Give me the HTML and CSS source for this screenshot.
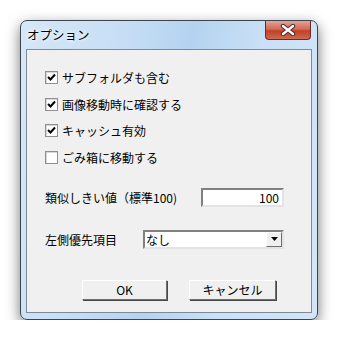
FILE: index.html
```html
<!DOCTYPE html>
<html><head><meta charset="utf-8"><link rel="stylesheet" href="styles.css"></head><body>
<div class="window">
    <div class="titlebar">
        <span class="title">オプション</span>
        <div class="close">
            <svg width="16" height="12" viewBox="0 0 16 12"><path d="M3 2 L13 10 M13 2 L3 10" stroke="#4a2a2a" stroke-width="4.4" stroke-linecap="round"/><path d="M3 2 L13 10 M13 2 L3 10" stroke="#fff" stroke-width="2.4" stroke-linecap="round"/></svg>
        </div>
    </div>
    <div class="client">
        <div class="checks">
            <div class="check"><span class="box"><svg width="9" height="9" viewBox="0 0 9 9"><path d="M1 4 L3.5 6.5 L8 1.5" fill="none" stroke="#000" stroke-width="2"/></svg></span>サブフォルダも含む</div>
            <div class="check"><span class="box"><svg width="9" height="9" viewBox="0 0 9 9"><path d="M1 4 L3.5 6.5 L8 1.5" fill="none" stroke="#000" stroke-width="2"/></svg></span>画像移動時に確認する</div>
            <div class="check"><span class="box"><svg width="9" height="9" viewBox="0 0 9 9"><path d="M1 4 L3.5 6.5 L8 1.5" fill="none" stroke="#000" stroke-width="2"/></svg></span>キャッシュ有効</div>
            <div class="check"><span class="box"></span>ごみ箱に移動する</div>
        </div>
        <div class="field field-threshold">
            <span class="field-label">類似しきい値（標準100)</span>
            <div class="textbox">100</div>
        </div>
        <div class="field field-priority">
            <span class="field-label">左側優先項目</span>
            <div class="combo">
                <span class="combo-value">なし</span>
                <span class="drop"><svg width="7" height="4" viewBox="0 0 7 4"><path d="M0 0 H7 L3.5 4 Z" fill="#000"/></svg></span>
            </div>
        </div>
        <div class="buttons">
            <div class="btn btn-ok">OK</div>
            <div class="btn btn-cancel">キャンセル</div>
        </div>
    </div>
</div>
</body></html>
```

FILE: styles.css
```css
/* Base */
body {
    margin: 0;
    background: #fff;
    font-family: "Noto Sans CJK JP", "Noto Sans", sans-serif;
    font-size: 12px;
    color: #000;
}

/* Window frame */
.window {
    margin: 20px 0 0 20px;
    width: 298px;
    height: 300px;
    box-sizing: border-box;
    border: 1px solid #3c4450;
    border-radius: 7px;
    background: linear-gradient(100deg, #d6e7f8 0%, #c6def5 30%, #b4d3f0 50%, #c9e0f6 70%, #d3e6f8 100%);
    box-shadow: 0 5px 14px rgba(0, 0, 0, 0.55);
    display: flex;
    flex-direction: column;
}

.titlebar {
    height: 28px;
    display: flex;
    justify-content: space-between;
    align-items: flex-start;
}

.title {
    margin: 5px 0 0 6px;
    font-size: 12.5px;
    line-height: 18px;
    text-shadow: 0 0 6px #fff, 0 0 3px #fff;
}

.close {
    width: 44px;
    height: 18px;
    margin-right: 6px;
    border: 1px solid #6b2a23;
    border-top: 0;
    border-radius: 0 0 4px 4px;
    background: linear-gradient(#e3a397 0%, #d46a56 45%, #c1402a 55%, #cf6a4e 100%);
    display: flex;
    align-items: center;
    justify-content: center;
}

/* Client area */
.client {
    flex: 1;
    margin: 0 5px 6px 5px;
    border: 1px solid #7e8a98;
    background: #f0f0f0;
    padding: 21px 0 0 18px;
    display: flex;
    flex-direction: column;
}

.checks {
    display: flex;
    flex-direction: column;
    gap: 13.5px;
}

.check {
    height: 13px;
    display: flex;
    align-items: center;
    gap: 4px;
    line-height: 13px;
}

.box {
    width: 13px;
    height: 13px;
    box-sizing: border-box;
    border: 1px solid #8f8f8f;
    box-shadow: inset 1px 1px 0 #d8d8d8;
    background: #fff;
    display: flex;
    align-items: center;
    justify-content: center;
    flex-shrink: 0;
}

/* Fields */
.field {
    display: flex;
    align-items: center;
    height: 19px;
}

.field-threshold {
    margin-top: 24px;
}

.field-priority {
    margin-top: 23px;
}

.field-label {
    line-height: 19px;
}

.textbox {
    margin-left: auto;
    margin-right: 27px;
    width: 83px;
    height: 19px;
    box-sizing: border-box;
    border: 2px solid;
    border-color: #808080 #e3e3e3 #e3e3e3 #808080;
    background: #fff;
    text-align: right;
    padding-right: 3px;
    line-height: 15px;
}

.combo {
    margin-left: auto;
    margin-right: 27px;
    width: 141px;
    height: 19px;
    box-sizing: border-box;
    border: 2px solid;
    border-color: #808080 #e3e3e3 #e3e3e3 #808080;
    background: #fff;
    display: flex;
    align-items: center;
    justify-content: space-between;
}

.combo-value {
    padding-left: 1px;
    line-height: 15px;
}

.drop {
    width: 16px;
    height: 15px;
    box-sizing: border-box;
    border: 1px solid;
    border-color: #fff #6f6f6f #6f6f6f #fff;
    background: #f0f0f0;
    display: flex;
    align-items: center;
    justify-content: center;
}

/* Buttons */
.buttons {
    display: flex;
    gap: 22px;
    margin: 31px 0 0 37px;
}

.btn {
    height: 20px;
    box-sizing: border-box;
    border: 1px solid;
    border-color: #fff #6f6f6f #6f6f6f #fff;
    box-shadow: 1px 1px 0 #4a4a4a;
    background: #f0f0f0;
    text-align: center;
    line-height: 18px;
}

.btn-ok {
    width: 85px;
}

.btn-cancel {
    width: 87px;
}
```
